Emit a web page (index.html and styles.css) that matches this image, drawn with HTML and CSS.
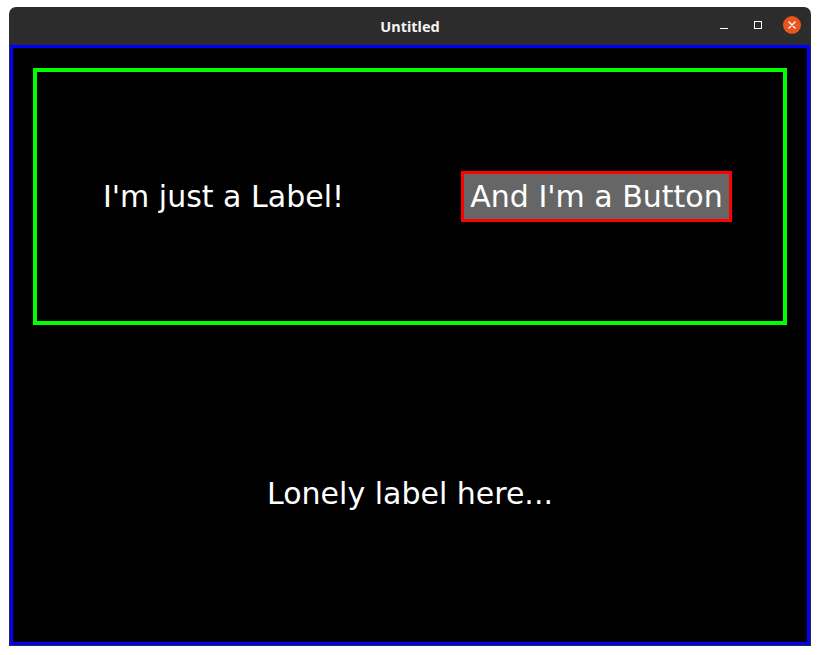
FILE: index.html
```html
<!DOCTYPE html>
<html>
<head>
<meta charset="utf-8">
<title>Untitled</title>
<link rel="stylesheet" href="styles.css">
</head>
<body>
<div class="window">
  <div class="titlebar">
    <span class="title">Untitled</span>
    <div class="controls">
      <span class="ctl ctl-min"><svg width="10" height="10" viewBox="0 0 10 10"><line x1="1" y1="8.5" x2="9" y2="8.5" stroke="#fff" stroke-width="1"/></svg></span>
      <span class="ctl ctl-max"><svg width="10" height="10" viewBox="0 0 10 10"><rect x="1.5" y="1.5" width="7" height="7" fill="none" stroke="#fff" stroke-width="1"/></svg></span>
      <span class="ctl ctl-close"><svg width="18" height="18" viewBox="0 0 18 18"><circle cx="9" cy="9" r="9" fill="#e95420"/><path d="M6 6 L12 12 M12 6 L6 12" stroke="#fff" stroke-width="1.4" stroke-linecap="round"/></svg></span>
    </div>
  </div>
  <div class="content">
    <div class="top-half">
      <div class="group">
        <div class="cell"><span class="label">I'm just a Label!</span></div>
        <div class="cell"><span class="button">And I'm a Button</span></div>
      </div>
    </div>
    <div class="bottom-half">
      <span class="label">Lonely label here...</span>
    </div>
  </div>
</div>
</body>
</html>
```
FILE: styles.css
```css
html, body {
  margin: 0;
  padding: 0;
  background: #ffffff;
}
.window {
  margin: 7px 0 0 9px;
  width: 800px;
  padding: 0 1px 1px;
  background: #2c2c2c;
  border-radius: 7px 7px 0 0;
}
.titlebar {
  position: relative;
  height: 38px;
  display: flex;
  align-items: center;
  justify-content: center;
}
.title {
  font-family: "Noto Sans", "DejaVu Sans", sans-serif;
  font-weight: 700;
  font-size: 14.5px;
  color: #f4f4f4;
}
.controls {
  position: absolute;
  right: 9px;
  top: 9px;
  display: flex;
  align-items: center;
}
.ctl {
  display: flex;
  align-items: center;
  justify-content: center;
}
.ctl-min { width: 10px; height: 10px; margin-right: 24px; }
.ctl-max { width: 10px; height: 10px; margin-right: 20px; }
.ctl-close { width: 18px; height: 18px; }
.ctl svg { display: block; }
.content {
  box-sizing: border-box;
  width: 800px;
  height: 600px;
  border: 3px solid #0000ff;
  background: #000;
  display: grid;
  grid-template-rows: minmax(0, 1fr) minmax(0, 1fr);
}
.top-half {
  padding: 20px;
  display: flex;
}
.group {
  flex: 1;
  border: 4px solid #00ff00;
  display: grid;
  grid-template-columns: 1fr 1fr;
}
.cell {
  display: flex;
  align-items: center;
  justify-content: center;
}
.bottom-half {
  display: flex;
  align-items: center;
  justify-content: center;
}
.label, .button {
  font-family: "DejaVu Sans", sans-serif;
  font-size: 30px;
  line-height: 35px;
  color: #ffffff;
}
.button {
  background: #666666;
  border: 3px solid #ff0000;
  padding: 5px 6px;
}
```
